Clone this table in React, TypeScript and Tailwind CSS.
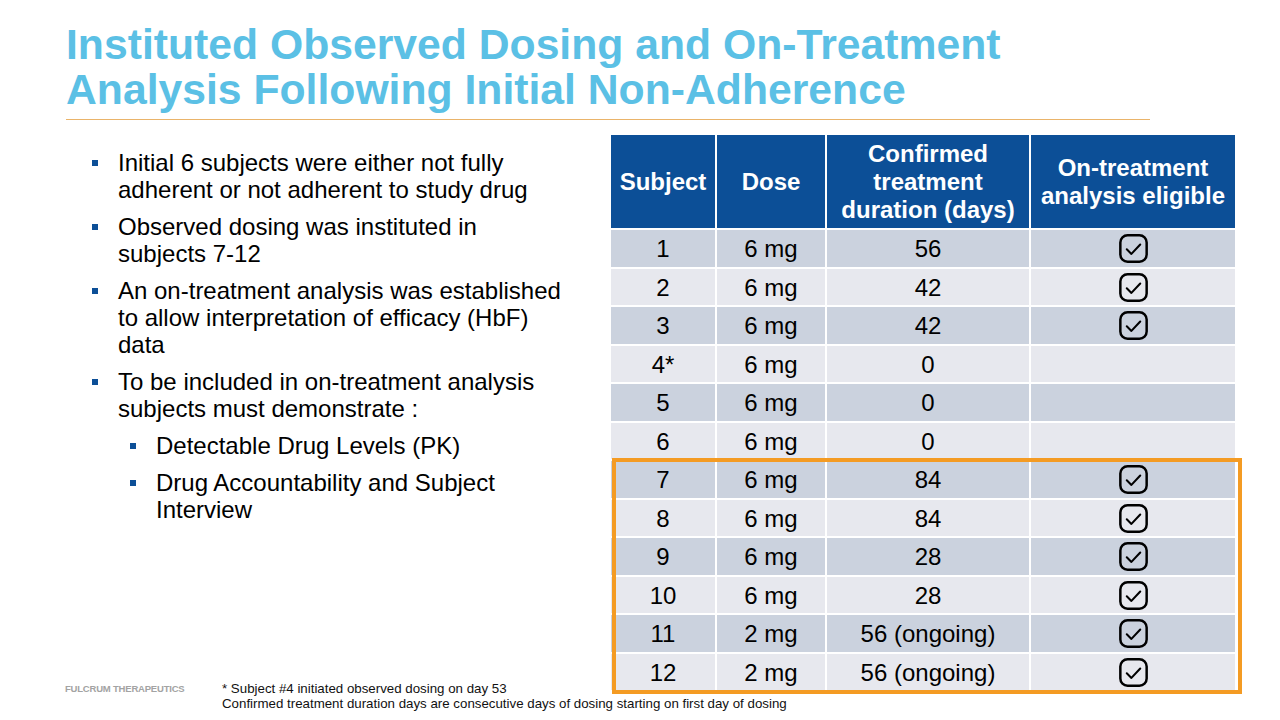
import React from 'react';

const FONT = "font-['Liberation_Sans',Arial,sans-serif]";

type Row = { subject: string; dose: string; days: string; eligible: boolean };

const ROWS: Row[] = [
  { subject: '1', dose: '6 mg', days: '56', eligible: true },
  { subject: '2', dose: '6 mg', days: '42', eligible: true },
  { subject: '3', dose: '6 mg', days: '42', eligible: true },
  { subject: '4*', dose: '6 mg', days: '0', eligible: false },
  { subject: '5', dose: '6 mg', days: '0', eligible: false },
  { subject: '6', dose: '6 mg', days: '0', eligible: false },
  { subject: '7', dose: '6 mg', days: '84', eligible: true },
  { subject: '8', dose: '6 mg', days: '84', eligible: true },
  { subject: '9', dose: '6 mg', days: '28', eligible: true },
  { subject: '10', dose: '6 mg', days: '28', eligible: true },
  { subject: '11', dose: '2 mg', days: '56 (ongoing)', eligible: true },
  { subject: '12', dose: '2 mg', days: '56 (ongoing)', eligible: true },
];

function CheckBox() {
  return (
    <svg width="29" height="29" viewBox="0 0 28 28" fill="none" className="inline-block">
      <rect x="1.3" y="1.3" width="25.4" height="25.4" rx="7" stroke="#000" strokeWidth="2.4" />
      <path d="M7.5 14.8 L12 19.2 L20.5 10.2" stroke="#000" strokeWidth="2" strokeLinecap="round" strokeLinejoin="round" />
    </svg>
  );
}

function Bullet({ children, sub = false }: { children: React.ReactNode; sub?: boolean }) {
  return (
    <li className={`flex items-start ${sub ? 'ml-[38px]' : ''} mt-[10px] first:mt-0`}>
      <span className="w-[26px] shrink-0 h-[27px] flex items-center">
        <span className="w-[6px] h-[6px] bg-[#0c4f97] block" />
      </span>
      <span className={`${sub ? 'w-[412px]' : 'w-[448px]'} text-[24px] leading-[27px] text-black`}>{children}</span>
    </li>
  );
}

export default function App() {
  return (
    <div className={`w-[1280px] h-[720px] bg-white overflow-hidden flex flex-col ${FONT}`}>
      {/* Title */}
      <h1 className="pl-[66px] pt-[22px] text-[42.7px] leading-[45px] font-bold text-[#5bc0e5]">
        Instituted Observed Dosing and On-Treatment
        <br />
        Analysis Following Initial Non-Adherence
      </h1>
      <div className="ml-[66px] mt-[7px] w-[1084px] h-px bg-[#eab46a]" />

      {/* Body */}
      <div className="flex items-start h-[561px]">
        <div className="w-[611px] pl-[92px] pt-[29px] shrink-0">
          <ul>
            <Bullet>Initial 6 subjects were either not fully adherent or not adherent to study drug</Bullet>
            <Bullet>Observed dosing was instituted in subjects 7-12</Bullet>
            <Bullet>An on-treatment analysis was established to allow interpretation of efficacy (HbF) data</Bullet>
            <Bullet>To be included in on-treatment analysis subjects must demonstrate :</Bullet>
            <Bullet sub>Detectable Drug Levels (PK)</Bullet>
            <Bullet sub>Drug Accountability and Subject Interview</Bullet>
          </ul>
        </div>

        <div className="relative mt-[15px] w-[624px] shrink-0">
          <table className="w-[624px] table-fixed border-collapse text-center text-[24px]">
            <colgroup>
              <col className="w-[105px]" />
              <col className="w-[110px]" />
              <col className="w-[204px]" />
              <col className="w-[205px]" />
            </colgroup>
            <thead>
              <tr className="h-[94px] bg-[#0c4f97] text-white font-bold leading-[28px]">
                <th className="border-2 border-white border-t-0 border-l-0 px-[6px]">Subject</th>
                <th className="border-2 border-white border-t-0 px-[6px]">Dose</th>
                <th className="border-2 border-white border-t-0 px-[10px]">Confirmed treatment duration (days)</th>
                <th className="border-2 border-white border-t-0 border-r-0 px-[6px]">On-treatment analysis eligible</th>
              </tr>
            </thead>
            <tbody>
              {ROWS.map((r, i) => (
                <tr key={r.subject} className={`h-[38.5px] leading-[28px] text-black ${i % 2 === 0 ? 'bg-[#cbd2de]' : 'bg-[#e7e8ee]'}`}>
                  <td className="border-2 border-white border-l-0 p-0 pt-[2px]">{r.subject}</td>
                  <td className="border-2 border-white p-0 pt-[2px]">{r.dose}</td>
                  <td className="border-2 border-white p-0 pt-[2px]">{r.days}</td>
                  <td className="border-2 border-white border-r-0 p-0 align-middle">
                    {r.eligible && (
                      <span className="flex justify-center pt-[1px]">
                        <CheckBox />
                      </span>
                    )}
                  </td>
                </tr>
              ))}
            </tbody>
          </table>
          {/* highlight of observed dosing subjects */}
          <div className="absolute left-[1px] top-[323px] w-[630px] h-[236px] border-4 border-[#f49b23] pointer-events-none" />
        </div>
      </div>

      {/* Footer */}
      <div className="flex items-start pl-[65px]">
        <div className="w-[157px] shrink-0 text-[9.5px] leading-[15px] font-bold text-[#a3a3a3] tracking-[-0.2px]">
          FULCRUM THERAPEUTICS
        </div>
        <div className="text-[13.3px] leading-[15px] text-[#111]">
          <p>* Subject #4 initiated observed dosing on day 53</p>
          <p>Confirmed treatment duration days are consecutive days of dosing starting on first day of dosing</p>
        </div>
      </div>
    </div>
  );
}
